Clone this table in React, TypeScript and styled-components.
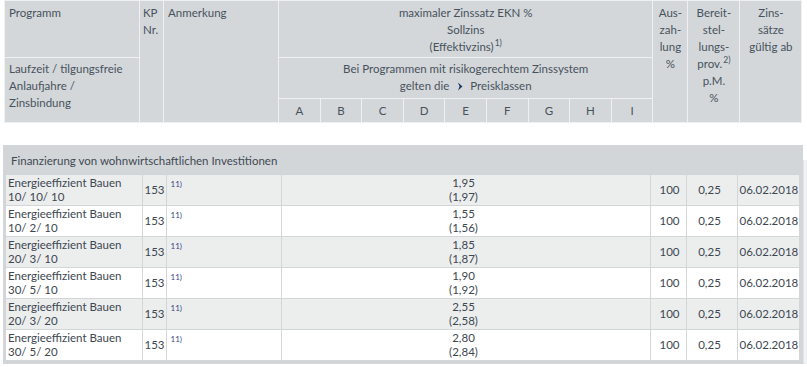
import React from "react";
import styled, { createGlobalStyle } from "styled-components";

const GlobalStyle = createGlobalStyle`
  html, body {
    margin: 0;
    background: #ffffff;
  }
  body {
    font-family: Lato, "Liberation Sans", sans-serif;
    font-size: 11.5px;
    color: #46505a;
  }
`;

const Page = styled.div`
  display: flex;
  flex-direction: column;
`;

const HeadTable = styled.table`
  margin-left: 4px;
  width: 798px;
  border-collapse: collapse;
  table-layout: fixed;
  background: #d3d7da;
`;

const Col = styled.col<{ $w: number }>`
  width: ${(p) => p.$w}px;
`;

const HeadRow = styled.tr<{ $h: number }>`
  height: ${(p) => p.$h}px;
`;

const HeadCell = styled.th<{ $align?: "left" | "center"; $pad?: number; $left?: number }>`
  border: 1px solid #eef0f1;
  padding: ${(p) => p.$pad ?? 3}px 4px 0 ${(p) => p.$left ?? 4}px;
  vertical-align: top;
  text-align: ${(p) => p.$align ?? "left"};
  font-weight: normal;
  line-height: 17px;
  color: #48525c;
`;

const LetterCell = styled.th`
  border: 1px solid #eef0f1;
  padding: 0;
  vertical-align: middle;
  text-align: center;
  font-weight: normal;
  color: #48525c;
`;

const Sup = styled.sup`
  font-size: 8.5px;
  line-height: 0;
  vertical-align: 5px;
  margin-left: 1px;
`;

const Chevron = styled.span`
  display: inline-block;
  width: 7px;
  margin: 0 6px 0 8px;
  vertical-align: -1px;
`;

const DataWrap = styled.div`
  display: flex;
  margin-top: 22px;
`;

const DataBox = styled.div`
  margin-left: 3px;
  width: 800px;
  box-sizing: border-box;
  background: #d3d6d9;
  padding: 0 4px 3px 3px;
`;

const Scroll = styled.div`
  width: 4px;
  background: #f1f2f3;
  border-left: 1px solid #e2e4e6;
  margin-top: 15px;
`;

const Title = styled.div`
  height: 29px;
  line-height: 31px;
  padding-left: 5px;
  color: #3f4953;
`;

const DataTable = styled.table`
  width: 793px;
  border-collapse: collapse;
  table-layout: fixed;
`;

const DataRow = styled.tr<{ $alt: boolean }>`
  height: 31px;
  background: ${(p) => (p.$alt ? "#eceeee" : "#ffffff")};
`;

const Cell = styled.td<{ $align?: "left" | "center" | "right"; $right?: number }>`
  border: 1px solid #d2d6d9;
  padding: 0 ${(p) => p.$right ?? 6}px 0 2px;
  text-align: ${(p) => p.$align ?? "left"};
  vertical-align: middle;
  line-height: 14px;
  color: #3d4751;
  &:first-child {
    border-left: none;
  }
  &:last-child {
    border-right: none;
  }
`;

const NoteCell = styled.td`
  border: 1px solid #d2d6d9;
  padding: 4px 4px 0 4px;
  vertical-align: top;
  font-size: 8px;
  line-height: 10px;
  color: #3b3f86;
`;

const letters = ["A", "B", "C", "D", "E", "F", "G", "H", "I"];
const headCols = [135, 24, 115, ...letters.map(() => 41.6), 35, 52, 62];
const dataCols = [136, 24, 115, 369, 36, 51, 62];

const rows = [
  { name: "10/ 10/ 10", rate: "1,95", eff: "(1,97)" },
  { name: "10/ 2/ 10", rate: "1,55", eff: "(1,56)" },
  { name: "20/ 3/ 10", rate: "1,85", eff: "(1,87)" },
  { name: "30/ 5/ 10", rate: "1,90", eff: "(1,92)" },
  { name: "20/ 3/ 20", rate: "2,55", eff: "(2,58)" },
  { name: "30/ 5/ 20", rate: "2,80", eff: "(2,84)" },
];

const PreisChevron = () => (
  <Chevron>
    <svg width="7" height="9" viewBox="0 0 7 9">
      <path d="M1 0.5 L5.5 4.5 L1 8.5 L2.5 4.5 Z" fill="#1f3a68" />
    </svg>
  </Chevron>
);

const App = () => {
  return (
    <Page>
      <GlobalStyle />
      <HeadTable>
        <colgroup>
          {headCols.map((w, i) => (
            <Col key={i} $w={w} />
          ))}
        </colgroup>
        <thead>
          <HeadRow $h={57}>
            <HeadCell>Programm</HeadCell>
            <HeadCell rowSpan={3} $left={3}>
              KP
              <br />
              Nr.
            </HeadCell>
            <HeadCell rowSpan={3}>Anmerkung</HeadCell>
            <HeadCell colSpan={9} $align="center">
              maximaler Zinssatz EKN %
              <br />
              Sollzins
              <br />
              (Effektivzins)<Sup>1)</Sup>
            </HeadCell>
            <HeadCell rowSpan={3} $align="center">
              Aus-
              <br />
              zah-
              <br />
              lung
              <br />%
            </HeadCell>
            <HeadCell rowSpan={3} $align="center">
              Bereit-
              <br />
              stel-
              <br />
              lungs-
              <br />
              prov.<Sup>2)</Sup>
              <br />
              p.M.
              <br />%
            </HeadCell>
            <HeadCell rowSpan={3} $align="center">
              Zins-
              <br />
              sätze
              <br />
              gültig ab
            </HeadCell>
          </HeadRow>
          <HeadRow $h={41}>
            <HeadCell rowSpan={2} $pad={2}>
              Laufzeit / tilgungsfreie
              <br />
              Anlaufjahre /
              <br />
              Zinsbindung
            </HeadCell>
            <HeadCell colSpan={9} $align="center" $pad={2}>
              Bei Programmen mit risikogerechtem Zinssystem
              <br />
              gelten die
              <PreisChevron />
              Preisklassen
            </HeadCell>
          </HeadRow>
          <HeadRow $h={24}>
            {letters.map((l) => (
              <LetterCell key={l}>{l}</LetterCell>
            ))}
          </HeadRow>
        </thead>
      </HeadTable>

      <DataWrap>
        <DataBox>
          <Title>Finanzierung von wohnwirtschaftlichen Investitionen</Title>
          <DataTable>
            <colgroup>
              {dataCols.map((w, i) => (
                <Col key={i} $w={w} />
              ))}
            </colgroup>
            <tbody>
              {rows.map((r, i) => (
                <DataRow key={r.name + i} $alt={i % 2 === 0}>
                  <Cell>
                    Energieeffizient Bauen
                    <br />
                    {r.name}
                  </Cell>
                  <Cell $align="right" $right={3}>
                    153
                  </Cell>
                  <NoteCell>11)</NoteCell>
                  <Cell $align="center">
                    {r.rate}
                    <br />
                    {r.eff}
                  </Cell>
                  <Cell $align="right">100</Cell>
                  <Cell $align="center">0,25</Cell>
                  <Cell $align="right" $right={3}>
                    06.02.2018
                  </Cell>
                </DataRow>
              ))}
            </tbody>
          </DataTable>
        </DataBox>
        <Scroll />
      </DataWrap>
    </Page>
  );
};

export default App;
